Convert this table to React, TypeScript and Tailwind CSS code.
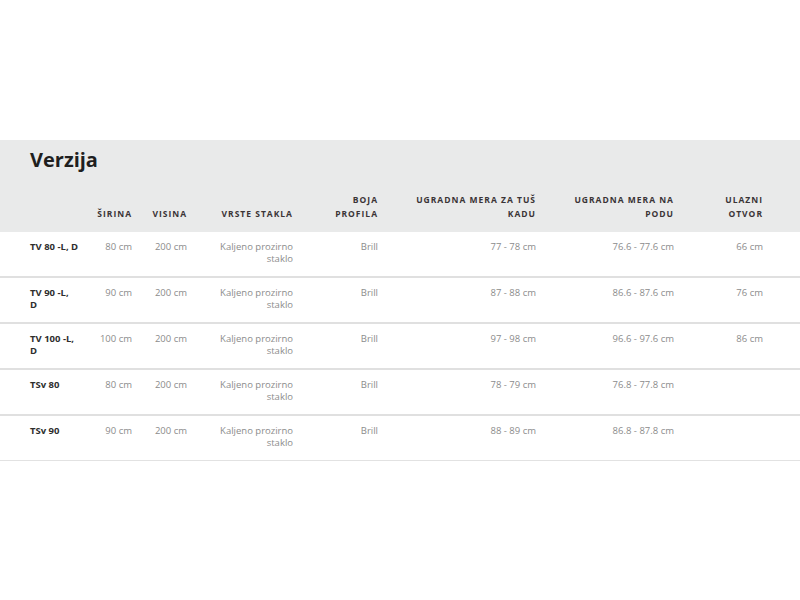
const rows = [
  { name: ["TV 80 -L, D"], w: "80 cm", h: "200 cm", tus: "77 - 78 cm", pod: "76.6 - 77.6 cm", otvor: "66 cm" },
  { name: ["TV 90 -L,", "D"], w: "90 cm", h: "200 cm", tus: "87 - 88 cm", pod: "86.6 - 87.6 cm", otvor: "76 cm" },
  { name: ["TV 100 -L,", "D"], w: "100 cm", h: "200 cm", tus: "97 - 98 cm", pod: "96.6 - 97.6 cm", otvor: "86 cm" },
  { name: ["TSv 80"], w: "80 cm", h: "200 cm", tus: "78 - 79 cm", pod: "76.8 - 77.8 cm", otvor: "" },
  { name: ["TSv 90"], w: "90 cm", h: "200 cm", tus: "88 - 89 cm", pod: "86.8 - 87.8 cm", otvor: "" },
];

const cols = "grid grid-cols-[55px_47px_55px_106px_85px_158px_138px_89px]";

function Head({ lines }: { lines: string[] }) {
  return (
    <div className="flex flex-col justify-end text-right">
      {lines.map((l) => (
        <span key={l} className="whitespace-nowrap">{l}</span>
      ))}
    </div>
  );
}

export default function App() {
  return (
    <div className="w-[800px] h-[600px] bg-white pt-[140px]" style={{ fontFamily: '"Open Sans", sans-serif' }}>
      <div className="bg-[#e9eaea] pl-[30px] pt-[6px] pb-[11px]">
        <h2 className="text-[20px] font-bold leading-[28px] text-[#1f1f1f]">Verzija</h2>
        <div className={`${cols} mt-[19px] text-[8.5px] font-bold tracking-[1px] leading-[14px] text-[#3a3436]`}>
          <div />
          <Head lines={["ŠIRINA"]} />
          <Head lines={["VISINA"]} />
          <Head lines={["VRSTE STAKLA"]} />
          <Head lines={["BOJA", "PROFILA"]} />
          <Head lines={["UGRADNA MERA ZA TUŠ", "KADU"]} />
          <Head lines={["UGRADNA MERA NA", "PODU"]} />
          <Head lines={["ULAZNI", "OTVOR"]} />
        </div>
      </div>
      {rows.map((r, i) => (
        <div
          key={i}
          className={`pl-[30px] pt-[9px] pb-[11px] ${i === rows.length - 1 ? "border-b border-[#e2e2e2]" : "border-b-2 border-[#e0e0e0]"}`}
        >
          <div className={`${cols} text-[9.5px] leading-[12px] text-[#8c8c8c]`}>
            <div className="font-bold text-[#2e2e2e] h-[24px]">
              {r.name.map((n) => (
                <div key={n} className="whitespace-nowrap">{n}</div>
              ))}
            </div>
            <div className="text-right">{r.w}</div>
            <div className="text-right">{r.h}</div>
            <div className="text-right">
              <div>Kaljeno prozirno</div>
              <div>staklo</div>
            </div>
            <div className="text-right">Brill</div>
            <div className="text-right">{r.tus}</div>
            <div className="text-right">{r.pod}</div>
            <div className="text-right">{r.otvor}</div>
          </div>
        </div>
      ))}
    </div>
  );
}
